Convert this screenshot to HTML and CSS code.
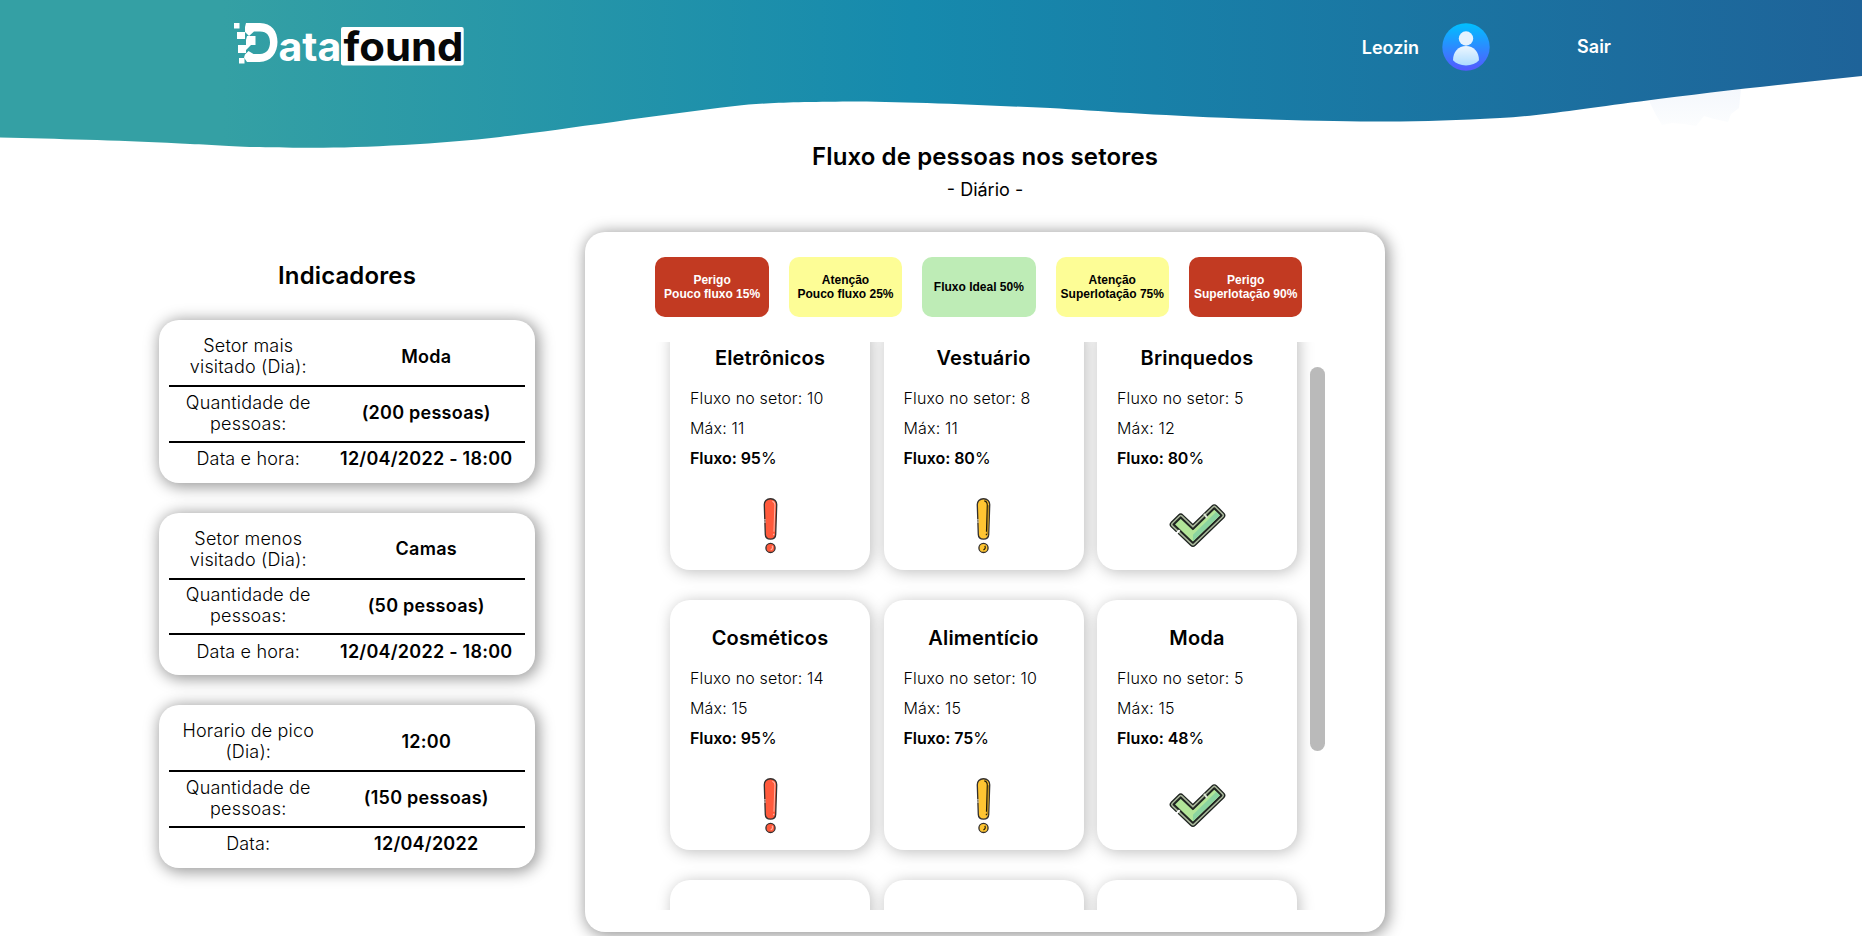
FILE: index.html
```html
<!DOCTYPE html>
<html lang="pt-BR">
<head>
<meta charset="utf-8">
<title>Datafound</title>
<link rel="stylesheet" href="styles.css">
</head>
<body>
<svg class="defs" width="0" height="0" aria-hidden="true">
  <defs>
    <symbol id="alert-red" viewBox="0 0 16 56">
      <path d="M8 1.700c-3.900 0-6.200 2.600-6.100 6l1 29c.1 3 2.200 4.700 5.100 4.700s5-1.700 5.100-4.700l1-29c.1-3.400-2.200-6-6.100-6z" fill="#ff5a3c" stroke="#33302f" stroke-width="1.300"/>
      <path d="M9.800 4.200c2 .6 2.600 2 2.500 4l-.9 26" fill="none" stroke="#ffb3a3" stroke-width="1"/>
      <path d="M11.200 36v1.500" stroke="#ffd0c6" stroke-width="1"/>
      <path d="M0 22.500h3.400M0 24.600h3.400" stroke="#fff" stroke-width=".8"/>
      <circle cx="8" cy="50" r="4.500" fill="#ff5a3c" stroke="#33302f" stroke-width="1.300"/>
      <path d="M9.600 48c1 1.600.3 3.500-1.400 4" fill="none" stroke="#ffb3a3" stroke-width="1.200"/>
    </symbol>
    <symbol id="alert-yellow" viewBox="0 0 16 56">
      <path d="M8 1.700c-3.900 0-6.200 2.600-6.100 6l1 29c.1 3 2.200 4.700 5.100 4.700s5-1.700 5.100-4.700l1-29c.1-3.400-2.200-6-6.100-6z" fill="#ffc532" stroke="#33302f" stroke-width="1.300"/>
      <path d="M12.700 8l-.9 29" stroke="#b58b22" stroke-width="1.500"/>
      <path d="M8.800 3.800c2.400.5 3 2 2.900 4.400l-.8 26M10.800 36v1.500" fill="none" stroke="#1c1808" stroke-width="1.100"/>
      <path d="M0 22.500h3.400M0 24.600h3.400" stroke="#fff" stroke-width=".8"/>
      <circle cx="8" cy="50" r="4.500" fill="#ffc532" stroke="#33302f" stroke-width="1.300"/>
      <path d="M9.300 48c1 1.600.3 3.500-1.400 4" fill="none" stroke="#2c250c" stroke-width="1.200"/>
    </symbol>
    <symbol id="check" viewBox="0 0 56 56">
      <path d="M11.500 24L23.500 35.500 44.500 15 51.500 22 23.500 49 4.500 31z" fill="#a9b79b" stroke="#1f2420" stroke-width="7.600" stroke-linejoin="round"/>
      <path d="M11.500 24L23.500 35.500 44.500 15 51.500 22 23.500 49 4.500 31z" fill="#a9b79b" stroke="#a9b79b" stroke-width="5" stroke-linejoin="round"/>
      <path d="M11.500 24L23.500 35.500 44.500 15 51.500 22 23.500 49 4.500 31z" fill="#b2e598" stroke="#1f2420" stroke-width="2" stroke-linejoin="round"/>
      <path d="M23.500 47.500L50 22 46.500 18.500 23.500 41z" fill="#8ad3a0"/>
      <path d="M34.500 20.500l3 4" stroke="#dfe8d6" stroke-width="2"/>
      <path d="M10.500 36.500l-3.500 3.500" stroke="#fff" stroke-width="2"/>
    </symbol>
  </defs>
</svg>

<header class="header">
  <svg class="wave" viewBox="0 0 1862 148" preserveAspectRatio="none" aria-hidden="true">
    <defs>
      <linearGradient id="sea" gradientUnits="userSpaceOnUse" x1="0" y1="0" x2="1862" y2="0">
        <stop offset=".12" stop-color="#34a0a4"/>
        <stop offset=".49" stop-color="#168aad"/>
        <stop offset="1" stop-color="#1e6399"/>
      </linearGradient>
      <linearGradient id="haze" x1="0" y1="0" x2="0" y2="1"><stop offset="0" stop-color="#f2f6fc"/><stop offset="1" stop-color="#fcfdfe"/></linearGradient>
    </defs>
    <path d="M1650 80h92l-3 28-8 6-3 8-14-3-10-3-8 10-12-2-12-1-10 2-6-10-6-12z" fill="url(#haze)"/>
    <path d="M0 0H1862V76L1810 81.500C1750 88 1700 93.500 1640 101.500C1580 109 1540 116 1500 118C1420 122.500 1370 122.500 1240 118.500C1150 115 1100 111 1050 108C980 105 900 101.500 850 101.500C790 102 760 103 735 106C650 116 560 130 500 137C440 144 360 148 310 147.800C230 147.500 220 145 180 143.500C110 140 60 139 0 137.500Z" fill="url(#sea)"/>
  </svg>
  <div class="header-bar">
    <svg class="logo" viewBox="0 0 232 54" width="232" height="54" role="img" aria-label="Datafound">
      <g fill="#fff">
        <path d="M12 2h14c11.500 0 17.500 8.500 17.500 19S37 41 25.500 41H13l-3-4.500 1-3 3.500-3.500 5 3h6.500c6.500 0 10-5 10-11.500S33 10.500 26 10.500h-6L15 15l-4-4V6z"/>
        <path d="M0 2h5.500v5.500H0zM3 11h8v7H3zM4 24h8v8H4zM5 37h5.500v5.500H5zM13 15h8.500v9H17l-5 5V19z"/>
        <rect x="107" y="6" width="122.700" height="38.500" rx="2"/>
      </g>
      <text class="logo-text" x="44.500" y="40" textLength="63" lengthAdjust="spacingAndGlyphs" fill="#fff">ata</text>
      <text class="logo-text" x="109.500" y="40" textLength="120" lengthAdjust="spacingAndGlyphs" fill="#060808">found</text>
    </svg>
    <nav class="nav">
      <span class="user-name">Leozin</span>
      <svg class="avatar" viewBox="0 0 48 48" width="48" height="48" aria-hidden="true">
        <defs>
          <linearGradient id="av" x1="0" y1="0" x2="0" y2="1"><stop offset="0" stop-color="#00c0ff"/><stop offset="1" stop-color="#5558ff"/></linearGradient>
          <linearGradient id="avb" x1="0" y1="0" x2="0" y2="1"><stop offset="0" stop-color="#ecf6ff"/><stop offset="1" stop-color="#addcff"/></linearGradient>
        </defs>
        <circle cx="24" cy="24" r="23.700" fill="url(#av)"/>
        <circle cx="24" cy="15.500" r="7.200" fill="#e6f3ff"/>
        <path d="M24 23c-7.600 0-13 6-13 14.200C14 40.500 18.500 42.400 24 42.400s10-1.900 13-5.200C37 29 31.600 23 24 23z" fill="url(#avb)"/>
      </svg>
      <a class="logout">Sair</a>
    </nav>
  </div>
</header>

<main class="main">
  <section class="indicators">
    <h2 class="heading">Indicadores</h2>
    <div class="indicator">
      <div class="row row-first"><span class="label">Setor mais<br>visitado (Dia):</span><b class="value">Moda</b></div>
      <div class="row"><span class="label">Quantidade de<br>pessoas:</span><b class="value">(200 pessoas)</b></div>
      <div class="row row-last"><span class="label">Data e hora:</span><b class="value">12/04/2022 - 18:00</b></div>
    </div>
    <div class="indicator">
      <div class="row row-first"><span class="label">Setor menos<br>visitado (Dia):</span><b class="value">Camas</b></div>
      <div class="row"><span class="label">Quantidade de<br>pessoas:</span><b class="value">(50 pessoas)</b></div>
      <div class="row row-last"><span class="label">Data e hora:</span><b class="value">12/04/2022 - 18:00</b></div>
    </div>
    <div class="indicator">
      <div class="row row-first"><span class="label">Horario de pico<br>(Dia):</span><b class="value">12:00</b></div>
      <div class="row"><span class="label">Quantidade de<br>pessoas:</span><b class="value">(150 pessoas)</b></div>
      <div class="row row-last"><span class="label">Data:</span><b class="value">12/04/2022</b></div>
    </div>
  </section>

  <section class="flow">
    <h2 class="heading">Fluxo de pessoas nos setores</h2>
    <p class="period">- Diário -</p>
    <div class="panel">
      <div class="legend">
        <div class="tag danger">Perigo<br>Pouco fluxo 15%</div>
        <div class="tag warn">Atenção<br>Pouco fluxo 25%</div>
        <div class="tag ideal">Fluxo Ideal 50%</div>
        <div class="tag warn">Atenção<br>Superlotação 75%</div>
        <div class="tag danger">Perigo<br>Superlotação 90%</div>
      </div>
      <div class="viewport">
        <div class="sectors">
          <article class="sector"><h3>Eletrônicos</h3><p>Fluxo no setor: 10</p><p>Máx: 11</p><p class="rate"><b>Fluxo: 95</b>%</p><svg class="alert"><use href="#alert-red"/></svg></article>
          <article class="sector"><h3>Vestuário</h3><p>Fluxo no setor: 8</p><p>Máx: 11</p><p class="rate"><b>Fluxo: 80</b>%</p><svg class="alert"><use href="#alert-yellow"/></svg></article>
          <article class="sector"><h3>Brinquedos</h3><p>Fluxo no setor: 5</p><p>Máx: 12</p><p class="rate"><b>Fluxo: 80</b>%</p><svg class="check"><use href="#check"/></svg></article>
          <article class="sector"><h3>Cosméticos</h3><p>Fluxo no setor: 14</p><p>Máx: 15</p><p class="rate"><b>Fluxo: 95</b>%</p><svg class="alert"><use href="#alert-red"/></svg></article>
          <article class="sector"><h3>Alimentício</h3><p>Fluxo no setor: 10</p><p>Máx: 15</p><p class="rate"><b>Fluxo: 75</b>%</p><svg class="alert"><use href="#alert-yellow"/></svg></article>
          <article class="sector"><h3>Moda</h3><p>Fluxo no setor: 5</p><p>Máx: 15</p><p class="rate"><b>Fluxo: 48</b>%</p><svg class="check"><use href="#check"/></svg></article>
          <article class="sector"><h3>Higiene</h3></article>
          <article class="sector"><h3>Cozinha</h3></article>
          <article class="sector"><h3>Eletrodomésticos</h3></article>
        </div>
        <div class="scrollbar"><div class="thumb"></div></div>
      </div>
    </div>
  </section>
</main>
</body>
</html>
```
FILE: styles.css
```css
* { box-sizing: border-box; margin: 0; padding: 0; }

body {
  height: 936px;
  overflow: hidden;
  background: #fff;
  color: #000;
  font-family: Inter, "Liberation Sans", sans-serif;
}

.defs { display: block; }

.header { position: relative; height: 142px; }
.wave { position: absolute; inset: 0; width: 100%; height: 148px; }
.header-bar {
  position: relative;
  display: flex;
  justify-content: space-between;
  align-items: flex-start;
  padding: 21px 251px 0 234px;
}
.logo { overflow: visible; }
.logo-text { font: 700 40px Inter, sans-serif; }
.nav {
  display: flex;
  align-items: center;
  padding-top: 2px;
  color: #fff;
  font-size: 18px;
  font-weight: 600;
}
.avatar { margin: 0 87px 0 23px; }
.logout { margin-top: -2px; }

.main {
  display: grid;
  grid-template-columns: 376px 800px;
  column-gap: 50px;
  padding-left: 159px;
}

.heading {
  font-size: 24px;
  font-weight: 600;
  letter-spacing: .12px;
  line-height: 29px;
  text-align: center;
}

.indicators { padding-top: 119px; }
.indicators .heading { margin-bottom: 30px; }
.indicator {
  height: 162.500px;
  margin-bottom: 30px;
  padding: 10px;
  border-radius: 20px;
  background: #fff;
  box-shadow: 2px 2px 15px 2px rgba(0, 0, 0, .4);
}
.row {
  display: grid;
  grid-template-columns: 158.500px 197.500px;
  align-items: center;
  padding: 4.500px 0 7px;
  font-size: 18px;
  line-height: 21px;
  text-align: center;
}
.row-first { padding: 5px 0 8px; }
.row-last { padding-top: 5.500px; }
.row + .row { border-top: 2px solid #000; }
.label { font-weight: 300; letter-spacing: .17px; }
.value { font-weight: 600; letter-spacing: .25px; }

.period { margin-top: 8px; font-size: 18px; line-height: 22px; text-align: center; }

.panel {
  height: 700px;
  margin-top: 31px;
  padding: 25px 60px 0 70px;
  border-radius: 20px;
  background: #fff;
  box-shadow: 2px 2px 15px 2px rgba(0, 0, 0, .4);
}
.legend {
  display: grid;
  grid-template-columns: repeat(5, 1fr);
  column-gap: 20px;
  width: 647px;
  height: 60px;
  margin-left: .4px;
}
.tag {
  display: flex;
  align-items: center;
  justify-content: center;
  border-radius: 10px;
  font: 700 12px/14px "Liberation Sans", Arial, sans-serif;
  text-align: center;
  white-space: nowrap;
}
.danger { background: #c23a22; color: #fff; }
.warn { background: #fdfd96; }
.ideal { background: #beecb6; }

.viewport {
  display: flex;
  justify-content: space-between;
  height: 568px;
  margin-top: 25px;
  overflow: hidden;
}
.sectors {
  display: grid;
  grid-template-columns: repeat(3, 200px);
  grid-auto-rows: 250px;
  gap: 30px 13.500px;
  margin: -22px 0 0 15px;
}
.sector {
  display: flex;
  flex-direction: column;
  padding: 20px;
  border-radius: 20px;
  background: #fff;
  box-shadow: 2px 2px 15px rgba(0, 0, 0, .26);
}
.sector h3 {
  align-self: center;
  margin-bottom: 7px;
  font-size: 20px;
  font-weight: 600;
  letter-spacing: .18px;
  line-height: 36px;
  white-space: nowrap;
}
.sector p { font-size: 16px; font-weight: 300; letter-spacing: .16px; line-height: 30px; }
.sector .rate { font-weight: 400; letter-spacing: -.05px; }
.sector b { font-weight: 600; }
.sector svg { align-self: center; flex: none; height: 57px; margin-top: 24px; }
.alert { width: 17px; }
.sector .check { width: 57px; height: 57px; margin-top: 20px; }

.scrollbar { width: 15px; padding-top: 25px; }
.thumb { height: 384px; border-radius: 8px; background: #bababa; }
```
